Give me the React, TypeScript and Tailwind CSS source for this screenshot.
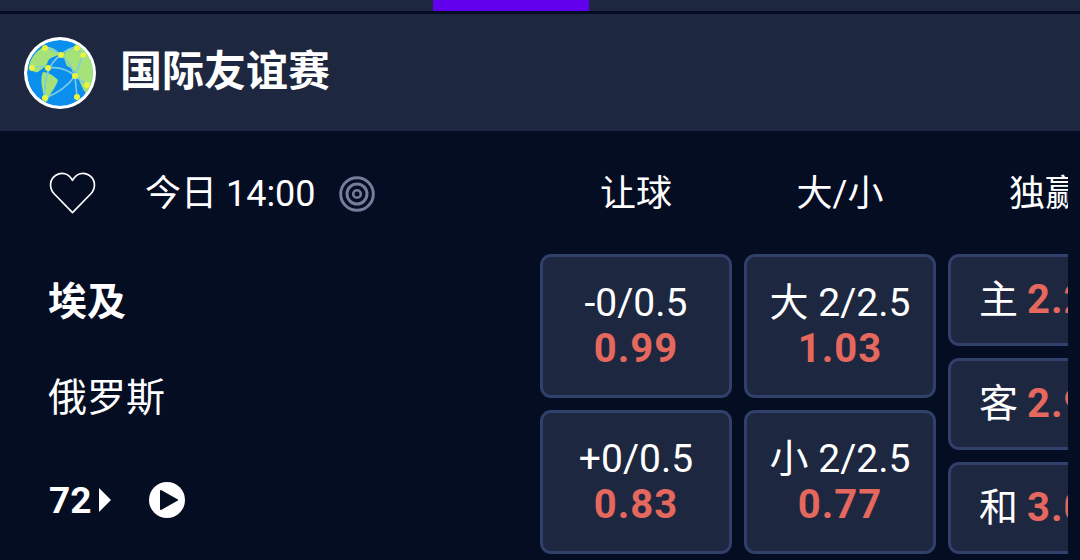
import React from 'react';

const cjk = "font-['Roboto','Noto_Sans_CJK_SC',sans-serif]";

const GlobeLogo: React.FC = () => (
  <svg width="72" height="72" viewBox="0 0 72 72">
    <defs>
      <clipPath id="globe">
        <circle cx="36" cy="36" r="33" />
      </clipPath>
    </defs>
    <circle cx="36" cy="36" r="36" fill="#fff" />
    <g clipPath="url(#globe)">
      <circle cx="36" cy="36" r="33" fill="#0b8fee" />
      <path d="M5 29 C7 20 13 13 20 10 C26 9 32 12 36 17 C31 20 26 20 24 24 C23 29 19 31 14 35 C10 36 7 33 5 29 Z" fill="#a5e27a" />
      <path d="M40 17 C44 12 50 8 56 9 C64 14 70 22 71 30 C72 38 70 46 62 56 C58 52 57 46 54 41 C52 35 48 31 43 29 C41 25 40 21 40 17 Z" fill="#a5e27a" />
      <path d="M19 35 C24 35 30 39 34 43 C32 50 28 54 26 58 C24 62 23 65 21 66 C20 60 19 55 18 50 C17 45 17 39 19 35 Z" fill="#a5e27a" />
      <g stroke="#7fcbe0" strokeWidth="1.6" fill="none">
        <path d="M8 31 Q18 28 24 31 Q40 29 51 39" />
        <path d="M21 11 Q32 13 37 18 Q45 10 53 11 L59 18 L51 39" />
        <path d="M37 18 Q19 30 21 61" />
        <path d="M37 18 Q47 26 51 39 L63 48" />
        <path d="M51 39 Q40 54 21 61" />
        <path d="M51 39 L53 60" />
      </g>
      <g fill="#e8f53a">
        <circle cx="21" cy="11" r="3" />
        <circle cx="37" cy="18" r="3" />
        <circle cx="53" cy="11" r="3" />
        <circle cx="59" cy="18" r="2.800" />
        <circle cx="8" cy="31" r="3" />
        <circle cx="24" cy="31" r="3" />
        <circle cx="51" cy="39" r="3" />
        <circle cx="63" cy="48" r="3" />
        <circle cx="21" cy="61" r="3" />
        <circle cx="53" cy="60" r="3" />
      </g>
    </g>
  </svg>
);

const HeartIcon: React.FC = () => (
  <svg width="47" height="44" viewBox="0 0 48 44" fill="none" stroke="#fff" strokeWidth="1.7" strokeLinejoin="round">
    <path d="M24 42 L5 22.5 C-0.5 16 1 7.5 7 3.8 C13 0 20 2 24 9 C28 2 35 0 41 3.8 C47 7.5 48.500 16 43 22.500 Z" />
  </svg>
);

const TargetIcon: React.FC = () => (
  <svg width="36" height="36" viewBox="0 0 36 36" fill="none" stroke="#747d99" strokeWidth="3">
    <circle cx="18" cy="18" r="16.300" />
    <circle cx="18" cy="18" r="10" />
    <circle cx="18" cy="18" r="3.800" strokeWidth="2.600" />
  </svg>
);

const OddsCell: React.FC<{ label: string; odds: string }> = ({ label, odds }) => (
  <div className="w-[192px] h-[144px] shrink-0 flex flex-col items-center pt-[24px] bg-[#1e2740] border-[3px] border-[#31406b] rounded-[11px]">
    <div className="text-[39px] leading-[44px] text-white whitespace-nowrap">{label}</div>
    <div className="text-[40px] leading-[47px] font-bold text-[#e5685e] tracking-[1px]">{odds}</div>
  </div>
);

const WinCell: React.FC<{ label: string; odds: string }> = ({ label, odds }) => (
  <div className="w-[160px] h-[92px] shrink-0 flex items-center pl-[28px] gap-[9px] bg-[#1e2740] border-y-[3px] border-l-[3px] border-[#31406b] rounded-l-[11px]">
    <span className="text-[39px] text-white leading-none">{label}</span>
    <span className="text-[40px] font-bold text-[#e5685e] leading-none whitespace-nowrap tracking-[1px]">{odds}</span>
  </div>
);

const App: React.FC = () => {
  return (
    <div className={`w-[1080px] h-[560px] overflow-hidden bg-[#050d23] ${cjk}`}>
      {/* top tab strip */}
      <div className="h-[11px] bg-[#1e2740] flex">
        <div className="ml-[433px] w-[156px] h-[11px] bg-[#6200ee]" />
      </div>
      <div className="h-[3px] bg-[#050d23]" />

      {/* league header */}
      <div className="h-[117px] bg-[#1e2740] flex items-center pl-[24px] gap-[26px]">
        <GlobeLogo />
        <span className="text-[42px] font-semibold text-white leading-none -ml-[2px] -mt-[2px]">国际友谊赛</span>
      </div>

      <div className="flex">
        {/* match info */}
        <div className="w-[540px] shrink-0 pl-[49px]">
          <div className="h-[123px] flex items-center">
            <HeartIcon />
            <span className="ml-[49px] mt-[2px] text-[36px] text-white leading-none whitespace-nowrap">今日 14:00</span>
            <span className="ml-[23px] mt-[2px]"><TargetIcon /></span>
          </div>
          <div className="text-[39px] font-bold text-white leading-[46px] mt-[25px] -ml-[1px]">埃及</div>
          <div className="text-[39px] text-white leading-[46px] mt-[50px] -ml-[1px]">俄罗斯</div>
          <div className="flex items-center mt-[57px] h-[44px]">
            <span className="text-[37px] font-bold text-white leading-none">72</span>
            <svg className="ml-[8px]" width="12" height="24" viewBox="0 0 12 24" fill="#fff">
              <path d="M0 0 L12 12 L0 24 Z" />
            </svg>
            <svg className="ml-[38px]" width="36" height="36" viewBox="0 0 36 36">
              <circle cx="18" cy="18" r="18" fill="#fff" />
              <path d="M12 9 L28 18 L12 27 Z" fill="#050d23" stroke="#050d23" strokeWidth="2" strokeLinejoin="round" />
            </svg>
          </div>
        </div>

        {/* odds, the third market runs off the scroller edge at x=1068 */}
        <div className="w-[528px] shrink-0 overflow-hidden">
          <div className="h-[123px] flex items-center text-[36px] text-white leading-none whitespace-nowrap pt-[2px]">
            <span className="w-[192px] text-center shrink-0">让球</span>
            <span className="ml-[12px] w-[192px] text-center shrink-0">大/小</span>
            <span className="ml-[73px] shrink-0">独赢</span>
          </div>
          <div className="flex gap-[12px]">
            <div className="flex flex-col gap-[12px]">
              <OddsCell label="-0/0.5" odds="0.99" />
              <OddsCell label="+0/0.5" odds="0.83" />
            </div>
            <div className="flex flex-col gap-[12px]">
              <OddsCell label="大 2/2.5" odds="1.03" />
              <OddsCell label="小 2/2.5" odds="0.77" />
            </div>
            <div className="flex flex-col gap-[12px]">
              <WinCell label="主" odds="2.25" />
              <WinCell label="客" odds="2.90" />
              <WinCell label="和" odds="3.05" />
            </div>
          </div>
        </div>
      </div>
    </div>
  );
};

export default App;
